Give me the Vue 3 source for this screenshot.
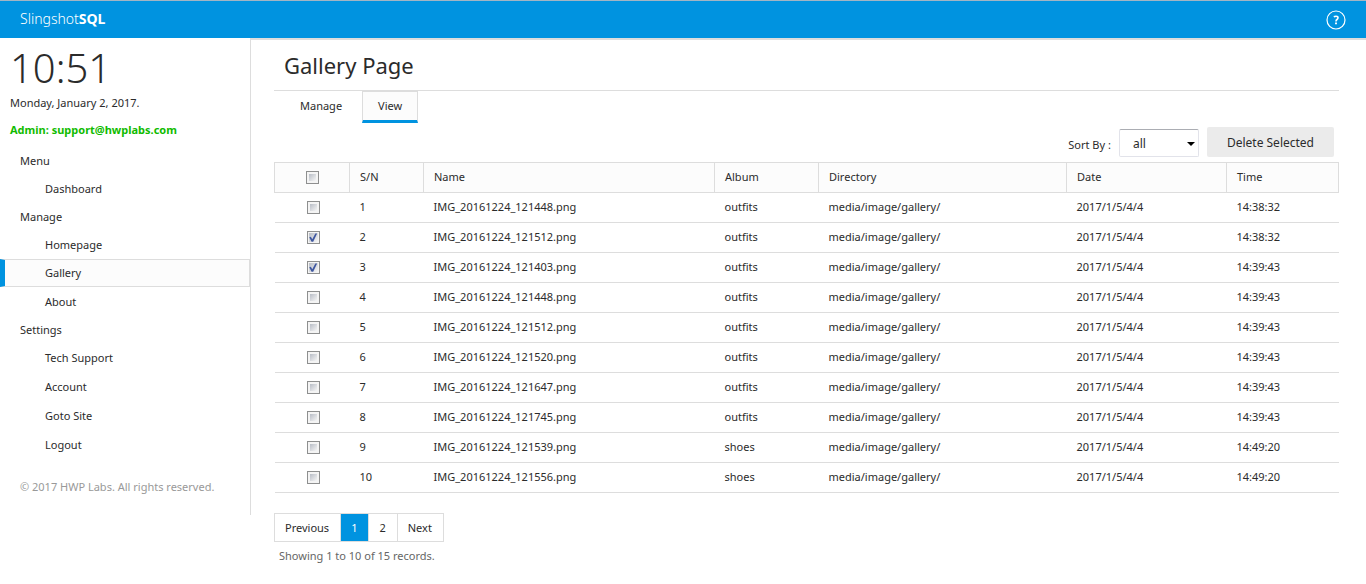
<script setup>
import { ref, computed } from 'vue'

const menu = [
  { title: 'Menu', items: ['Dashboard'] },
  { title: 'Manage', items: ['Homepage', 'Gallery', 'About'] },
  { title: 'Settings', items: ['Tech Support', 'Account', 'Goto Site', 'Logout'], spaced: true },
]
const current = 'Gallery'

const files = [
  ['121448', 'outfits', '14:38:32'],
  ['121512', 'outfits', '14:38:32'],
  ['121403', 'outfits', '14:39:43'],
  ['121448', 'outfits', '14:39:43'],
  ['121512', 'outfits', '14:39:43'],
  ['121520', 'outfits', '14:39:43'],
  ['121647', 'outfits', '14:39:43'],
  ['121745', 'outfits', '14:39:43'],
  ['121539', 'shoes', '14:49:20'],
  ['121556', 'shoes', '14:49:20'],
]
const rows = files.map(([stamp, album, time], i) => ({
  id: i + 1,
  name: `IMG_20161224_${stamp}.png`,
  album,
  directory: 'media/image/gallery/',
  date: '2017/1/5/4/4',
  time,
}))

const selected = ref([2, 3])
const sortBy = ref('all')
const allSelected = computed({
  get: () => selected.value.length === rows.length,
  set: (on) => { selected.value = on ? rows.map((r) => r.id) : [] },
})
</script>

<template>
  <div class="page">
    <header class="topbar">
      <a href="#" class="brand">Slingshot<b>SQL</b></a>
      <button type="button" class="help" aria-label="Help">
        <svg viewBox="0 0 20 20" width="20" height="20" fill="none" stroke="#fff">
          <circle cx="10" cy="10" r="9" stroke-width="1.2" />
          <path d="M7.8 6.8Q8.8 6.2 10 6.2Q12 6.2 12 7.8Q12 8.8 11 9.5Q10 10.2 10 11.4" stroke-width="1.6" />
          <path d="M10 12.5V14.3" stroke-width="1.9" />
        </svg>
      </button>
    </header>

    <div class="body">
      <aside class="sidebar">
        <div class="clock">10:51</div>
        <div class="date">Monday, January 2, 2017.</div>
        <div class="admin">Admin: support@hwplabs.com</div>
        <nav>
          <section v-for="group in menu" :key="group.title">
            <h2>{{ group.title }}</h2>
            <ul :class="{ spaced: group.spaced }">
              <li v-for="item in group.items" :key="item">
                <a href="#" :class="{ active: item === current }">{{ item }}</a>
              </li>
            </ul>
          </section>
        </nav>
        <footer>© 2017 HWP Labs. All rights reserved.</footer>
      </aside>

      <main>
        <h1>Gallery Page</h1>
        <div class="tabs">
          <a href="#">Manage</a>
          <a href="#" class="active">View</a>
        </div>

        <div class="toolbar">
          <label for="sort">Sort By :</label>
          <div class="select">
            <select id="sort" v-model="sortBy">
              <option>all</option>
              <option>outfits</option>
              <option>shoes</option>
            </select>
          </div>
          <button type="button" class="delete">Delete Selected</button>
        </div>

        <table>
          <colgroup>
            <col class="c-check" /><col class="c-sn" /><col /><col class="c-album" />
            <col class="c-dir" /><col class="c-date" /><col class="c-time" />
          </colgroup>
          <thead>
            <tr>
              <th><input v-model="allSelected" type="checkbox" aria-label="Select all" /></th>
              <th>S/N</th>
              <th>Name</th>
              <th>Album</th>
              <th>Directory</th>
              <th>Date</th>
              <th>Time</th>
            </tr>
          </thead>
          <tbody>
            <tr v-for="row in rows" :key="row.id">
              <td><input v-model="selected" type="checkbox" :value="row.id" :aria-label="`Select ${row.name}`" /></td>
              <td>{{ row.id }}</td>
              <td>{{ row.name }}</td>
              <td>{{ row.album }}</td>
              <td>{{ row.directory }}</td>
              <td>{{ row.date }}</td>
              <td>{{ row.time }}</td>
            </tr>
          </tbody>
        </table>

        <div class="pager">
          <button type="button">Previous</button>
          <button type="button" class="current">1</button>
          <button type="button">2</button>
          <button type="button">Next</button>
        </div>
        <p class="summary">Showing 1 to 10 of 15 records.</p>
      </main>
    </div>
  </div>
</template>

<style>
body {
  background: #fff;
}
</style>

<style scoped>
.page {
  font: 11px/16px "Noto Sans", "Open Sans", sans-serif;
  color: #2b2b2b;
}
.page *,
.page *::after {
  box-sizing: border-box;
}
a {
  color: inherit;
  text-decoration: none;
}
button,
select {
  font: inherit;
  color: inherit;
  border: 0;
  margin: 0;
}
.topbar {
  display: flex;
  align-items: flex-start;
  justify-content: space-between;
  height: 38px;
  padding: 8px 20px 0;
  background: #0093e0;
  border-top: 1px solid #a3b5c4;
}
.brand {
  color: #fff;
  font-size: 14px;
  font-weight: 300;
  line-height: 20px;
}
.brand b {
  font-weight: 700;
}
.help {
  display: flex;
  margin-top: 1px;
  padding: 0;
  background: none;
}
.body {
  display: flex;
  align-items: flex-start;
}
.sidebar {
  flex: none;
  width: 251px;
  padding-bottom: 20px;
  border-right: 1px solid #ddd;
}
.clock {
  padding: 6px 10px 0;
  font-size: 40px;
  font-weight: 300;
  line-height: 48px;
}
.date {
  padding: 3px 10px 0;
}
.admin {
  padding: 11px 10px 9px;
  color: #1b0;
  font-weight: 700;
}
h2 {
  margin: 0;
  padding-left: 20px;
  font-size: 11px;
  font-weight: 400;
  line-height: 28px;
}
ul {
  display: flex;
  flex-direction: column;
  margin: 0;
  padding: 0;
  list-style: none;
}
ul.spaced {
  gap: 1px;
}
li a {
  display: block;
  padding-left: 45px;
  line-height: 28px;
}
li a.active {
  margin-bottom: 1px;
  padding-left: 40px;
  line-height: 26px;
  background: #fcfcfc;
  border: 1px solid #ddd;
  border-left: 5px solid #0093e0;
}
footer {
  padding: 20px 20px 0;
  color: #999;
}
main {
  flex: 1;
  min-width: 0;
  padding: 0 27px 20px 23px;
  border-top: 2px solid #ddd;
}
h1 {
  margin: 0;
  padding: 9px 10px;
  font-size: 22px;
  font-weight: 400;
  line-height: 32px;
  border-bottom: 1px solid #ddd;
}
.tabs {
  display: flex;
  gap: 4px;
  padding-left: 10px;
}
.tabs a {
  padding: 0 16px;
  line-height: 30px;
}
.tabs a.active {
  padding: 0 15px;
  line-height: 28px;
  background: #fcfcfc;
  border: 1px solid #ddd;
  border-top-width: 1px;
  border-bottom: 3px solid #0093e0;
}
.toolbar {
  display: flex;
  align-items: flex-end;
  justify-content: flex-end;
  gap: 8px;
  padding: 4px 5px 5px 0;
}
.toolbar label {
  padding-bottom: 4px;
}
.select {
  position: relative;
}
.select::after {
  content: "";
  position: absolute;
  right: 4px;
  top: 13px;
  border: 4px solid transparent;
  border-top-color: #000;
  border-bottom: 0;
  pointer-events: none;
}
select {
  display: block;
  width: 80px;
  height: 28px;
  padding: 1px 13px 0;
  appearance: none;
  background: #fff;
  border: 1px solid #e2e3ea;
  border-top-color: #abadb3;
  border-radius: 2px;
  font-size: 12px;
}
.delete {
  height: 30px;
  padding: 2px 20px 0;
  font-size: 12px;
  background: #ebebeb;
  border-radius: 2px;
}
table {
  width: 100%;
  table-layout: fixed;
  border-collapse: collapse;
}
.c-check { width: 75px; }
.c-sn { width: 74px; }
.c-album { width: 104px; }
.c-dir { width: 248px; }
.c-date { width: 160px; }
.c-time { width: 112px; }
th,
td {
  height: 30px;
  padding: 0 10px 2px;
  text-align: left;
  font-weight: 400;
  border-bottom: 1px solid #ddd;
}
th {
  background: #fcfcfc;
  border: 1px solid #ddd;
}
th:first-child,
td:first-child {
  text-align: center;
}
td:first-child {
  padding-left: 12px;
}
input {
  display: inline-block;
  width: 13px;
  height: 13px;
  margin: 0;
  vertical-align: middle;
  appearance: none;
  border: 1px solid #8e8f8f;
  background: linear-gradient(135deg, #b8bdc6, #f6f6f6) content-box, #f4f4f4;
  padding: 2px;
}
input:checked {
  padding: 1px;
}
input:checked::after {
  content: "";
  display: block;
  width: 9px;
  height: 9px;
  background: #3f57a0;
  clip-path: polygon(8% 48%, 26% 42%, 42% 68%, 76% 4%, 96% 4%, 52% 96%, 34% 96%);
}
.pager {
  display: flex;
  width: max-content;
  margin-top: 20px;
  border: 1px solid #ddd;
}
.pager button {
  padding: 0 11px 0 10px;
  line-height: 27px;
  background: #fff;
  border-left: 1px solid #ddd;
}
.pager button:first-child {
  border-left: 0;
}
.pager button.current {
  color: #fff;
  background: #0093e0;
}
.summary {
  margin: 6px 5px 0;
  color: #666;
}
</style>
